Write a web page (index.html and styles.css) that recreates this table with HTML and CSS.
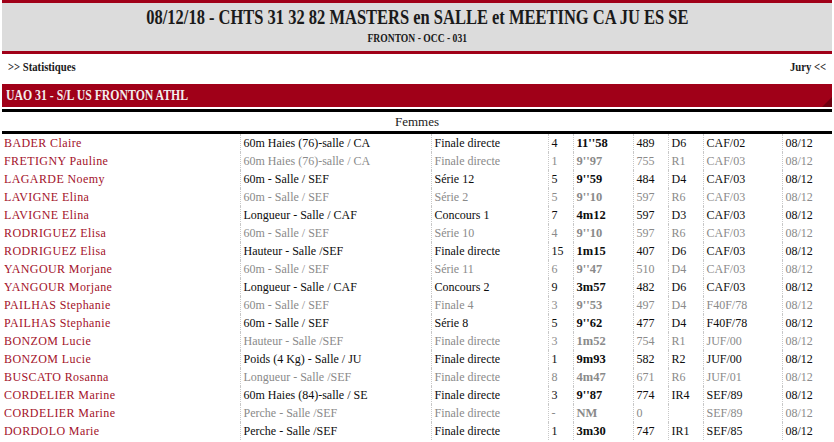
FILE: index.html
```html
<!DOCTYPE html>
<html lang="fr">
<head>
<meta charset="utf-8">
<title>Résultats</title>
<link rel="stylesheet" href="styles.css">
</head>
<body>
<div class="page">
  <header class="head">
    <h1 class="title">08/12/18 - CHTS 31 32 82 MASTERS en SALLE et MEETING CA JU ES SE</h1>
    <div class="sub">FRONTON - OCC - 031</div>
  </header>
  <nav class="links">
    <span class="lk lk-l">&gt;&gt; Statistiques</span>
    <span class="lk lk-r">Jury &lt;&lt;</span>
  </nav>
  <div class="club"><span class="club-txt">UAO 31 - S/L US FRONTON ATHL</span><span class="corner"></span></div>
  <table class="res">
    <colgroup>
      <col class="c-name"><col class="c-ev"><col class="c-tour"><col class="c-pl"><col class="c-perf"><col class="c-pts"><col class="c-niv"><col class="c-cat"><col class="c-date">
    </colgroup>
    <thead>
      <tr><th colspan="9">Femmes</th></tr>
    </thead>
    <tbody>
      <tr><td class="nm">BADER Claire</td><td>60m Haies (76)-salle / CA</td><td>Finale directe</td><td>4</td><td class="pf">11''58</td><td>489</td><td>D6</td><td>CAF/02</td><td>08/12</td></tr>
      <tr class="g"><td class="nm">FRETIGNY Pauline</td><td>60m Haies (76)-salle / CA</td><td>Finale directe</td><td>1</td><td class="pf">9''97</td><td>755</td><td>R1</td><td>CAF/03</td><td>08/12</td></tr>
      <tr><td class="nm">LAGARDE Noemy</td><td>60m - Salle / SEF</td><td>Série 12</td><td>5</td><td class="pf">9''59</td><td>484</td><td>D4</td><td>CAF/03</td><td>08/12</td></tr>
      <tr class="g"><td class="nm">LAVIGNE Elina</td><td>60m - Salle / SEF</td><td>Série 2</td><td>5</td><td class="pf">9''10</td><td>597</td><td>R6</td><td>CAF/03</td><td>08/12</td></tr>
      <tr><td class="nm">LAVIGNE Elina</td><td>Longueur - Salle / CAF</td><td>Concours 1</td><td>7</td><td class="pf">4m12</td><td>597</td><td>D3</td><td>CAF/03</td><td>08/12</td></tr>
      <tr class="g"><td class="nm">RODRIGUEZ Elisa</td><td>60m - Salle / SEF</td><td>Série 10</td><td>4</td><td class="pf">9''10</td><td>597</td><td>R6</td><td>CAF/03</td><td>08/12</td></tr>
      <tr><td class="nm">RODRIGUEZ Elisa</td><td>Hauteur - Salle /SEF</td><td>Finale directe</td><td>15</td><td class="pf">1m15</td><td>407</td><td>D6</td><td>CAF/03</td><td>08/12</td></tr>
      <tr class="g"><td class="nm">YANGOUR Morjane</td><td>60m - Salle / SEF</td><td>Série 11</td><td>6</td><td class="pf">9''47</td><td>510</td><td>D4</td><td>CAF/03</td><td>08/12</td></tr>
      <tr><td class="nm">YANGOUR Morjane</td><td>Longueur - Salle / CAF</td><td>Concours 2</td><td>9</td><td class="pf">3m57</td><td>482</td><td>D6</td><td>CAF/03</td><td>08/12</td></tr>
      <tr class="g"><td class="nm">PAILHAS Stephanie</td><td>60m - Salle / SEF</td><td>Finale 4</td><td>3</td><td class="pf">9''53</td><td>497</td><td>D4</td><td>F40F/78</td><td>08/12</td></tr>
      <tr><td class="nm">PAILHAS Stephanie</td><td>60m - Salle / SEF</td><td>Série 8</td><td>5</td><td class="pf">9''62</td><td>477</td><td>D4</td><td>F40F/78</td><td>08/12</td></tr>
      <tr class="g"><td class="nm">BONZOM Lucie</td><td>Hauteur - Salle /SEF</td><td>Finale directe</td><td>3</td><td class="pf">1m52</td><td>754</td><td>R1</td><td>JUF/00</td><td>08/12</td></tr>
      <tr><td class="nm">BONZOM Lucie</td><td>Poids (4 Kg) - Salle / JU</td><td>Finale directe</td><td>1</td><td class="pf">9m93</td><td>582</td><td>R2</td><td>JUF/00</td><td>08/12</td></tr>
      <tr class="g"><td class="nm">BUSCATO Rosanna</td><td>Longueur - Salle /SEF</td><td>Finale directe</td><td>8</td><td class="pf">4m47</td><td>671</td><td>R6</td><td>JUF/01</td><td>08/12</td></tr>
      <tr><td class="nm">CORDELIER Marine</td><td>60m Haies (84)-salle / SE</td><td>Finale directe</td><td>3</td><td class="pf">9''87</td><td>774</td><td>IR4</td><td>SEF/89</td><td>08/12</td></tr>
      <tr class="g"><td class="nm">CORDELIER Marine</td><td>Perche - Salle /SEF</td><td>Finale directe</td><td>-</td><td class="pf">NM</td><td>0</td><td></td><td>SEF/89</td><td>08/12</td></tr>
      <tr><td class="nm">DORDOLO Marie</td><td>Perche - Salle /SEF</td><td>Finale directe</td><td>1</td><td class="pf">3m30</td><td>747</td><td>IR1</td><td>SEF/85</td><td>08/12</td></tr>
    </tbody>
  </table>
</div>
</body>
</html>
```
FILE: styles.css
```css
html, body {
  margin: 0;
  padding: 0;
  background: #fff;
}
.page {
  padding: 0 2px;
  font-family: "Liberation Serif", serif;
  color: #111;
}
.head {
  background: #dcdcdc;
  border-top: 3px solid #a00018;
  border-bottom: 3px solid #a00018;
  height: 48px;
  display: flex;
  flex-direction: column;
  align-items: center;
}
.title {
  margin: 2px 0 0;
  font-size: 21px;
  line-height: 25px;
  font-weight: bold;
  white-space: nowrap;
  color: #1a1a1a;
  transform: scaleX(0.785);
}
.sub {
  margin-top: 1px;
  font-size: 12px;
  line-height: 14px;
  font-weight: bold;
  white-space: nowrap;
  color: #1a1a1a;
  transform: scaleX(0.8);
}
.links {
  display: flex;
  justify-content: space-between;
  padding: 6px 6px 0 6px;
  height: 24px;
  font-size: 13px;
  line-height: 14px;
  font-weight: bold;
  color: #1a1a1a;
}
.lk {
  display: inline-block;
  white-space: nowrap;
  transform: scaleX(0.82);
}
.lk-l { transform-origin: left center; }
.lk-r { transform-origin: right center; }
.club {
  position: relative;
  background: #a00018;
  color: #f2eeee;
  height: 23px;
  line-height: 23px;
  padding-left: 4px;
  font-size: 15px;
  font-weight: bold;
  overflow: hidden;
}
.club-txt {
  display: inline-block;
  white-space: nowrap;
  transform: scaleX(0.785);
  transform-origin: left center;
}
.corner {
  position: absolute;
  right: 0;
  bottom: 0;
  width: 0;
  height: 0;
  border-left: 10px solid transparent;
  border-bottom: 10px solid #6e0010;
}
.res {
  margin-top: 2px;
  width: 100%;
  border-collapse: collapse;
  table-layout: fixed;
  font-size: 12px;
}
.c-name { width: 238px; }
.c-ev { width: 191px; }
.c-tour { width: 117px; }
.c-pl { width: 25px; }
.c-perf { width: 60px; }
.c-pts { width: 35px; }
.c-niv { width: 35px; }
.c-cat { width: 79px; }
.c-date { width: 50px; }
.res th {
  border-top: 3px solid #000;
  border-bottom: 3px solid #000;
  height: 19px;
  padding: 0;
  font-weight: normal;
  font-size: 13px;
  color: #1a1a1a;
}
.res td {
  height: 18px;
  padding: 0 0 0 3px;
  line-height: 18px;
  white-space: nowrap;
  overflow: hidden;
  border-left: 1px dotted #c8c8c8;
  color: #0d0d0d;
}
.res td.nm {
  border-left: none;
  padding-left: 2px;
  color: #a3122a;
  letter-spacing: 0.4px;
}
.res td.pf {
  font-weight: bold;
  font-size: 12.5px;
}
.res tr.g td {
  color: #8a8a8a;
}
.res tr.g td.nm {
  color: #a3122a;
}
```
